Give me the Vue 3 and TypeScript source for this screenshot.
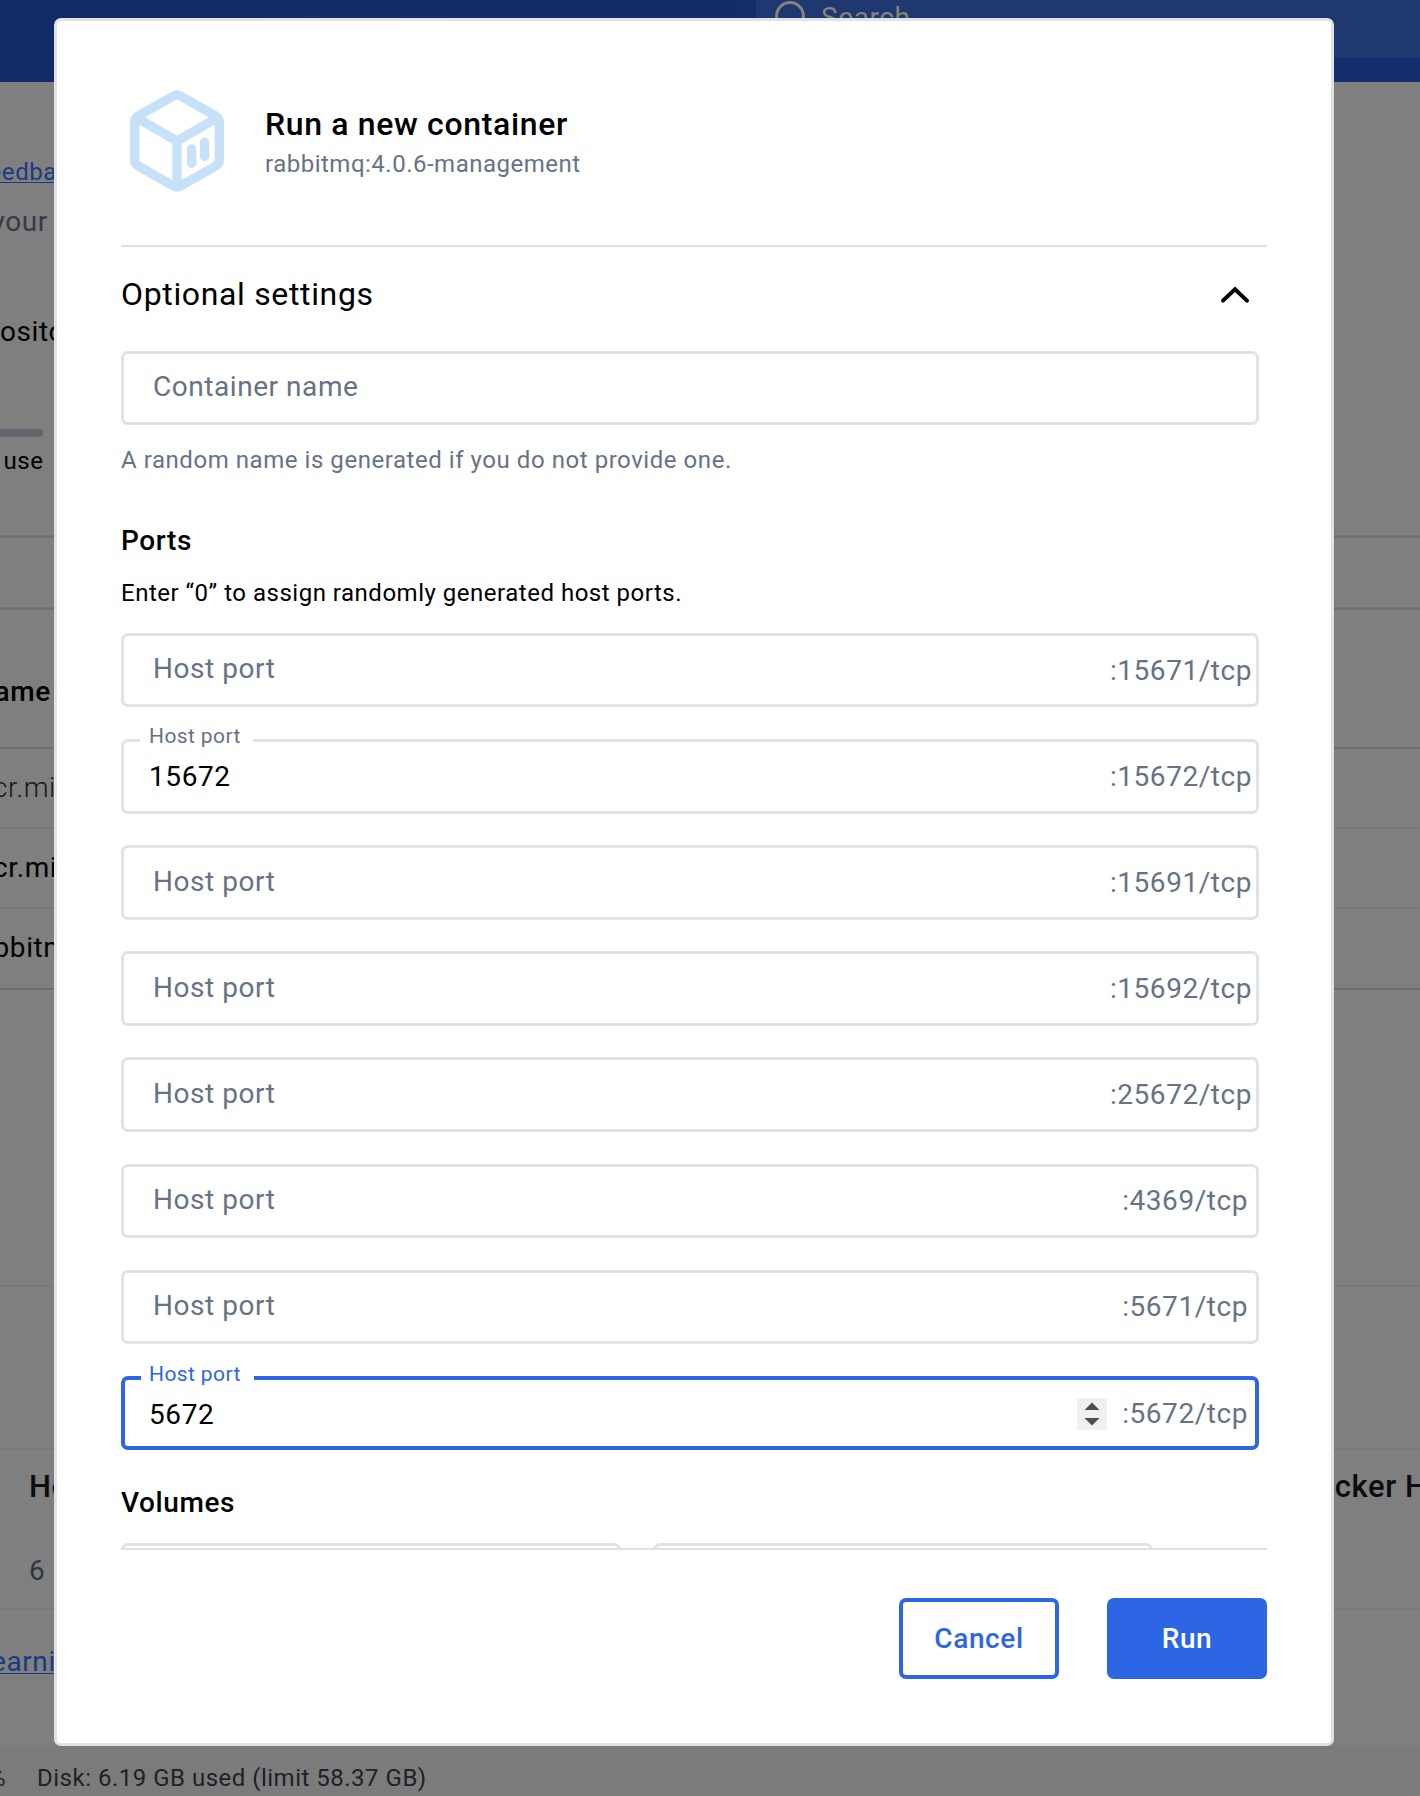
<script setup lang="ts">
import { ref } from 'vue'

interface PortField {
  container: string
  host: string
  focused?: boolean
}

const image = 'rabbitmq:4.0.6-management'

const ports = ref<PortField[]>([
  { container: '15671', host: '' },
  { container: '15672', host: '15672' },
  { container: '15691', host: '' },
  { container: '15692', host: '' },
  { container: '25672', host: '' },
  { container: '4369', host: '' },
  { container: '5671', host: '' },
  { container: '5672', host: '5672', focused: true },
])
</script>

<template>
  <div class="screen">
    <div class="page">
      <header class="topbar">
        <div class="search">
          <svg class="search-icon" width="40" height="40" viewBox="0 0 40 40">
            <circle cx="16" cy="16" r="13.4" />
            <path d="M26 26 L36 36" />
          </svg>
          <span>Search</span>
        </div>
      </header>
      <div class="line feedback"><a>eedback</a></div>
      <div class="line your">your</div>
      <div class="line repo">ository</div>
      <div class="meter"></div>
      <div class="line use">use</div>
      <div class="toolbar"></div>
      <div class="thead"><span>ame</span></div>
      <div class="trow thin"><span>cr.mi</span></div>
      <div class="trow"><span>cr.mi</span></div>
      <div class="trow last"><span>bbitm</span></div>
      <div class="blank"></div>
      <div class="blank2"></div>
      <div class="cards">
        <div class="card-heads"><span>Ho</span><span class="hub">ocker Hub</span></div>
        <div class="six">6</div>
      </div>
      <div class="learn"><a>earning</a></div>
      <footer class="status"><span class="pct">%</span><span class="disk">Disk: 6.19 GB used (limit 58.37 GB)</span></footer>
    </div>

    <section class="modal">
      <div class="head">
        <svg class="cube" width="94" height="102" viewBox="0 0 94 102">
          <path class="edge" d="M43.5 6 Q47 4 50.5 6 L85.5 25.8 Q89.3 28 89.3 32.4 V69.6 Q89.3 74 85.5 76.2 L50.5 96 Q47 98 43.5 96 L8.5 76.2 Q4.7 74 4.7 69.6 V32.4 Q4.7 28 8.5 25.8 Z" />
          <path class="edge" d="M7 28 L47 51 L87 28 M47 51 V96" />
          <path class="edge" d="M61.7 59 V73.3 M74.6 52.3 V66.4" stroke-linecap="round" />
        </svg>
        <div class="titles">
          <h1>Run a new container</h1>
          <p>{{ image }}</p>
        </div>
      </div>

      <div class="body">
        <div class="accordion">
          <h2>Optional settings</h2>
          <svg width="32" height="20" viewBox="0 0 32 20"><path d="M4 15.6 L16 4.2 L28 15.6" /></svg>
        </div>

        <div class="field name"><span class="placeholder">Container name</span></div>
        <p class="helper">A random name is generated if you do not provide one.</p>

        <h3 class="ports-title">Ports</h3>
        <p class="hint">Enter “0” to assign randomly generated host ports.</p>

        <div class="ports">
          <div
            v-for="p in ports"
            :key="p.container"
            class="field"
            :class="{ focused: p.focused }"
          >
            <span v-if="p.host" class="float">Host port</span>
            <span v-if="p.host" class="value">{{ p.host }}</span>
            <span v-else class="placeholder">Host port</span>
            <span v-if="p.focused" class="spinner">
              <svg width="30" height="32" viewBox="0 0 30 32">
                <path d="M7.5 12 L15 4.5 L22.5 12 Z M7.5 20 L15 27.5 L22.5 20 Z" />
              </svg>
            </span>
            <span class="suffix" :class="{ short: p.container.length < 5 }">:{{ p.container }}/tcp</span>
          </div>
        </div>

        <h3 class="volumes-title">Volumes</h3>
        <div class="volumes">
          <div class="field"></div>
          <div class="field"></div>
        </div>
      </div>

      <div class="actions">
        <button class="btn outline">Cancel</button>
        <button class="btn solid">Run</button>
      </div>
    </section>
  </div>
</template>

<style>
body {
  margin: 0;
}
</style>

<style scoped>
* {
  box-sizing: border-box;
}
.screen {
  position: relative;
  width: 1420px;
  height: 1796px;
  overflow: hidden;
  font-family: Roboto, sans-serif;
  letter-spacing: 0.6px;
  color: #000;
}
h1, h2, h3, p {
  margin: 0;
}
.page {
  display: flex;
  flex-direction: column;
  height: 1796px;
  background: #7f7f7f;
  white-space: nowrap;
}
.page > * {
  flex: none;
}
.topbar {
  height: 82px;
  padding-left: 756px;
  background: linear-gradient(90deg, #112b64, #14306c);
}
.search {
  display: flex;
  align-items: flex-start;
  height: 58px;
  padding-left: 18px;
  background: #1f386f;
  color: #85837c;
  font-size: 28px;
  line-height: 35px;
}
.search-icon {
  margin-right: 7px;
  fill: none;
  stroke: #85837c;
  stroke-width: 3;
}
.line {
  height: 40px;
  line-height: 40px;
  font-size: 28px;
}
.feedback {
  margin-top: 70px;
  margin-left: -11.5px;
  font-size: 24px;
}
.feedback a, .learn a {
  color: #193a82;
  text-decoration: underline;
  text-decoration-thickness: 1px;
  text-underline-offset: 2px;
}
.your {
  margin: 10px 0 0 -8.5px;
  color: #363b45;
}
.repo {
  margin-top: 70px;
}
.meter {
  width: 43px;
  height: 8px;
  margin-top: 77px;
  border-radius: 0 4px 4px 0;
  background: #65666d;
}
.use {
  margin: 4px 0 0 3.5px;
  font-size: 24px;
}
.toolbar {
  height: 75px;
  margin-top: 54px;
  border: solid #727273;
  border-width: 3px 0;
}
.thead {
  height: 139px;
  padding-top: 62px;
  border-bottom: 2px solid #6f6f70;
  line-height: 40px;
  font-size: 28px;
  font-weight: 500;
}
.thead span {
  margin-left: -5.5px;
}
.trow {
  display: flex;
  align-items: center;
  height: 80px;
  padding-bottom: 2px;
  border-bottom: 2px solid #797979;
  font-size: 28px;
}
.trow span {
  margin-left: -7px;
}
.trow.last span {
  margin-left: -6.5px;
}
.trow.thin {
  font-weight: 300;
  color: #16181c;
}
.trow.last {
  height: 81px;
  border-color: #6d6d6e;
}
.blank {
  height: 297px;
  border-bottom: 2px solid #797979;
}
.blank2 {
  height: 163px;
  border-bottom: 2px solid #797979;
}
.cards {
  height: 160px;
  padding: 17px 0 0 29px;
  border-bottom: 2px solid #797979;
}
.card-heads {
  display: flex;
  height: 40px;
  line-height: 40px;
  font-size: 31px;
  font-weight: 500;
  color: #0b0c0f;
}
.card-heads span {
  flex: none;
  width: 1287.5px;
}
.six {
  margin-top: 44px;
  line-height: 40px;
  font-size: 28px;
  color: #30353f;
}
.learn {
  height: 136px;
  padding-top: 32px;
  margin-left: -8px;
  line-height: 40px;
  font-size: 28px;
}
.learn a {
  margin-left: -1px;
}
.status {
  display: flex;
  height: 50px;
  padding-top: 11.5px;
  background: #7b7b7b;
  line-height: 40px;
  font-size: 24px;
  letter-spacing: 0.5px;
  color: #1e2127;
}
.pct {
  width: 49px;
  margin-left: -12px;
}

.modal {
  position: absolute;
  left: 54px;
  top: 18px;
  display: flex;
  flex-direction: column;
  width: 1280px;
  height: 1728px;
  padding: 0 64px;
  border: 3px solid #e1e2e6;
  border-radius: 7px;
  background: #fff;
}
.head {
  display: flex;
  align-items: flex-start;
  height: 226px;
  border-bottom: 2px solid #e0e0e1;
}
.cube {
  margin: 69px 41px 0 9px;
  overflow: visible;
}
.edge {
  fill: none;
  stroke: #c7e1f8;
  stroke-width: 9.4;
}
.titles {
  padding-top: 83px;
}
h1 {
  font-size: 32px;
  font-weight: 500;
  line-height: 40px;
  letter-spacing: 0.65px;
}
.titles p {
  line-height: 40px;
  font-size: 24px;
  letter-spacing: 0.5px;
  color: #677285;
}
.body {
  height: 1303px;
  overflow: hidden;
  border-bottom: 2px solid #e0e0e1;
}
.accordion {
  display: flex;
  align-items: flex-start;
  justify-content: space-between;
  height: 104px;
  padding: 27px 16px 0 0;
}
.accordion svg {
  margin-top: 11px;
  fill: none;
  stroke: #000;
  stroke-width: 4;
  stroke-linecap: round;
}
h2 {
  font-size: 32px;
  font-weight: 400;
  line-height: 40px;
  letter-spacing: 0.65px;
}
.field {
  position: relative;
  display: flex;
  align-items: center;
  width: 1138px;
  height: 74.4px;
  border: 3px solid #e1e2e6;
  border-radius: 7px;
  font-size: 28px;
  line-height: 40px;
}
.field.name {
  height: 74px;
}
.placeholder {
  flex: 1;
  margin: -1.4px 0 0 29px;
  color: #677285;
  letter-spacing: 0.55px;
}
.value {
  flex: 1;
  margin: 2px 0 0 25px;
}
.suffix {
  margin: 1px 4px 0 0;
  color: #677285;
  letter-spacing: 0.55px;
}
.suffix.short {
  margin-right: 8px;
}
.float {
  position: absolute;
  left: 16px;
  top: -26px;
  width: 113px;
  padding-left: 9px;
  background: #fff;
  color: #677285;
  font-size: 21px;
  letter-spacing: 0.4px;
}
.focused {
  border: 4px solid #2c66e5;
}
.focused .float {
  padding-left: 8px;
  color: #2c66e5;
}
.focused .value {
  margin: 3px 0 0 24px;
}
.focused .suffix {
  margin: 2px 7px 0 0;
}
.spinner {
  display: flex;
  margin: 2px 15.5px 0 0;
  background: #f0f0f0;
}
.spinner path {
  fill: #4e4e4e;
}
.helper {
  margin-top: 15px;
  line-height: 40px;
  font-size: 24px;
  letter-spacing: 0.55px;
  color: #677285;
}
h3 {
  font-size: 28px;
  font-weight: 500;
  line-height: 40px;
}
.ports-title {
  margin-top: 40.6px;
}
.hint {
  margin: 12px 0 20.4px;
  line-height: 40px;
  font-size: 24px;
  letter-spacing: 0.51px;
}
.ports {
  display: flex;
  flex-direction: column;
  gap: 31.74px;
}
.volumes-title {
  margin: 32.4px 0 20.2px;
}
.volumes {
  display: flex;
  gap: 32.5px;
}
.volumes .field {
  width: 499.7px;
}
.actions {
  display: flex;
  justify-content: flex-end;
  gap: 48px;
  padding-top: 48px;
}
.btn {
  width: 160px;
  height: 81px;
  padding: 0;
  border: 4px solid #2c66e5;
  border-radius: 7px;
  font: 500 28px/40px Roboto, sans-serif;
  letter-spacing: 0.6px;
}
.outline {
  background: #fff;
  color: #2c66e5;
}
.solid {
  background: #2c66e5;
  color: #fff;
}
</style>
